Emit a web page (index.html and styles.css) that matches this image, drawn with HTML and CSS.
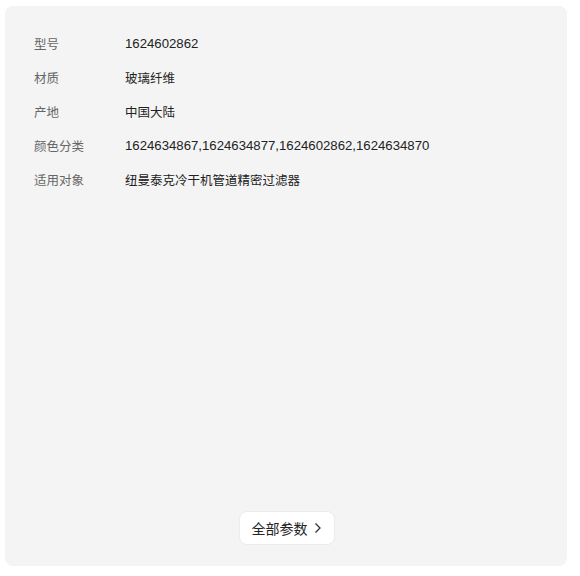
FILE: index.html
```html
<!DOCTYPE html>
<html lang="zh">
<head>
<meta charset="utf-8">
<link rel="stylesheet" href="styles.css">
</head>
<body>
<div class="card">
  <div class="params">
    <div class="row"><span class="label">型号</span><span class="value num">1624602862</span></div>
    <div class="row"><span class="label">材质</span><span class="value">玻璃纤维</span></div>
    <div class="row"><span class="label">产地</span><span class="value">中国大陆</span></div>
    <div class="row"><span class="label">颜色分类</span><span class="value num">1624634867,1624634877,1624602862,1624634870</span></div>
    <div class="row"><span class="label">适用对象</span><span class="value">纽曼泰克冷干机管道精密过滤器</span></div>
  </div>
  <div class="footer">
    <button class="more">全部参数<svg class="chev" width="8" height="12" viewBox="0 0 8 12"><path d="M1.5 1.5 L6 6 L1.5 10.5" fill="none" stroke="#333" stroke-width="1.3"/></svg></button>
  </div>
</div>
</body>
</html>
```
FILE: styles.css
```css
html, body {
  margin: 0;
  padding: 0;
  background: #fff;
}
body {
  padding: 6px 13px 10px 5px;
  font-family: "Noto Sans CJK SC", sans-serif;
}
.card {
  width: 562px;
  height: 560px;
  box-sizing: border-box;
  background: #f4f4f4;
  border-radius: 8px;
  padding: 20px 29px 21px 29px;
  display: flex;
  flex-direction: column;
}
.params {
  flex: 1;
}
.row {
  display: flex;
  height: 34px;
  align-items: center;
  font-size: 12.5px;
}
.row:last-child {
  height: 35px;
}
.label {
  width: 91px;
  flex: none;
  color: #666;
}
.value {
  color: #222;
}
.num {
  font-family: "Liberation Sans", "Noto Sans CJK SC", sans-serif;
  font-size: 13.2px;
}
.footer {
  display: flex;
  justify-content: center;
}
.more {
  width: 96px;
  height: 34px;
  background: #fff;
  border: 1px solid #ececec;
  border-radius: 8px;
  font-family: inherit;
  font-size: 14px;
  color: #222;
  display: flex;
  align-items: center;
  justify-content: center;
  gap: 6px;
  padding: 0;
  margin-left: 1px;
}
.chev {
  display: block;
}
```
